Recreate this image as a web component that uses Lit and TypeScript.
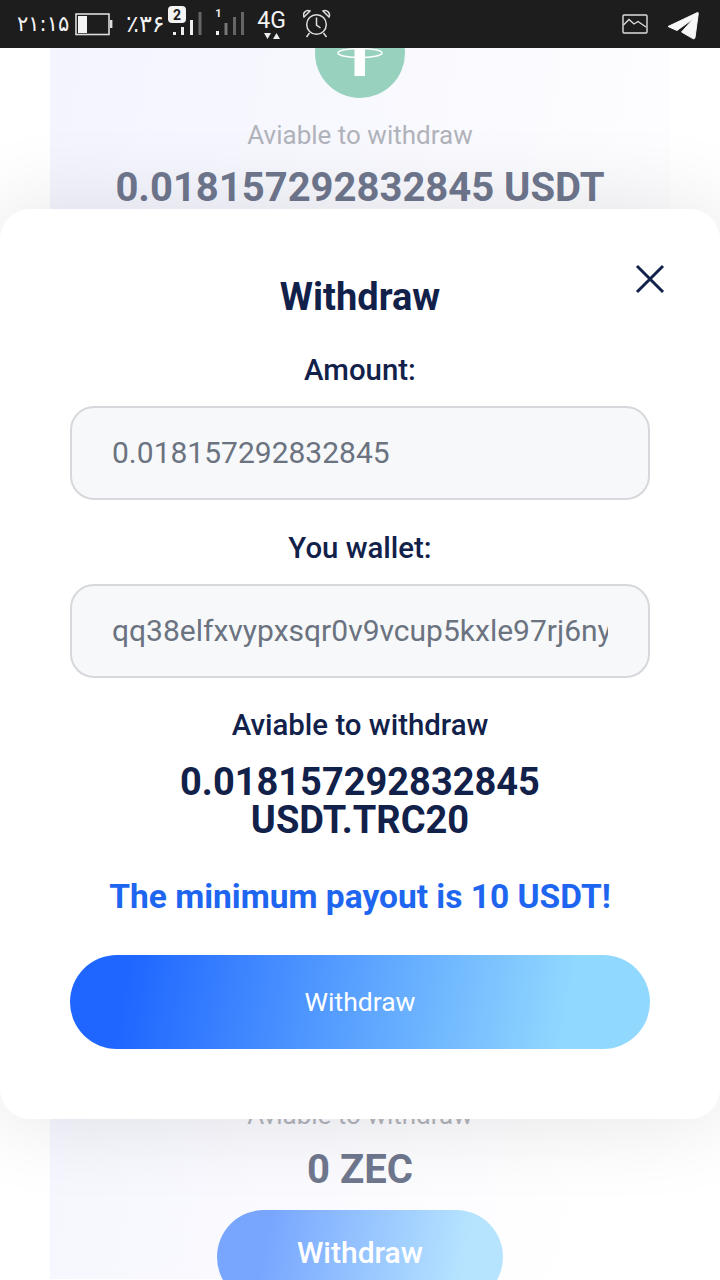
import { LitElement, html, css } from "lit";
import { customElement } from "lit/decorators.js";

@customElement("app-root")
export class AppRoot extends LitElement {
  static styles = css`
    :host { display: block; width: 720px; height: 1280px; position: relative; overflow: hidden; font-family: Roboto, "Liberation Sans", sans-serif; background: #fff; }
    .status { height: 48px; background: #1d1d1d; color: #f4f4f4; display: flex; align-items: center; padding: 0 21px 0 17px; box-sizing: border-box; position: relative; z-index: 3; }
    .status svg { display: block; flex: none; }
    .time { font: 500 21px "DejaVu Sans", sans-serif; width: 52px; white-space: nowrap; letter-spacing: -2.600px; line-height: 48px; }
    .pct { font: 500 24px "DejaVu Sans", sans-serif; letter-spacing: -1px; width: 40px; margin-left: 13px; white-space: nowrap; line-height: 48px; }
    .net { font: 400 23px Roboto, sans-serif; display: flex; flex-direction: column; align-items: center; line-height: 20px; width: 29px; margin-left: 13px; padding-top: 2px; }
    .net svg { margin-top: 2px; }
    .battery { margin-left: 6px; }
    .sig2 { margin-left: 12px; }
    .alarm { margin-left: 17px; }
    .photo { margin-right: 19px; }
    .spacer { flex: 1; }
    .page { height: 1232px; overflow: hidden; background: #fff; display: flex; justify-content: center; position: relative; }
    .cards { width: 620px; height: 1232px; background: linear-gradient(100deg, #f3f4fe, #fff 90%); display: flex; flex-direction: column; align-items: center; color: #6f778e; flex: none; margin-top: -1px; }
    .coin { width: 90px; height: 90px; border-radius: 50%; background: #98d2be; margin-top: -39px; flex: none; position: relative; }
    .coin svg { position: absolute; left: 0; top: 0; }
    .avail { font-size: 26px; line-height: 30px; color: #b1b3bb; margin-top: 22px; }
    .avail.low { margin-top: 0; }
    .val { font-size: 40px; font-weight: 700; line-height: 44px; margin-top: 16px; }
    .val.zec { margin-top: 18px; }
    .gap { height: 890px; flex: none; }
    .btn2 { width: 286px; height: 94px; box-sizing: border-box; padding-bottom: 10px; border-radius: 47px; background: linear-gradient(100deg, #78a6ff 18%, #b6e4ff 85%); color: #fff; font-size: 30px; font-weight: 500; display: flex; align-items: center; justify-content: center; margin-top: 18px; flex: none; }
    .sheet { position: absolute; left: 0; right: 0; top: 209px; height: 910px; background: #fff; border-radius: 30px; z-index: 2; box-sizing: border-box; padding: 64px 70px 0; display: flex; flex-direction: column; align-items: center; color: #12214a; text-align: center; box-shadow: 0 0 90px rgba(0,0,0,.11); }
    .close { position: absolute; top: 54px; right: 54px; }
    h2 { margin: 0; font-size: 38px; font-weight: 700; line-height: 48px; }
    .lbl { font-size: 29.400px; font-weight: 500; line-height: 36px; margin-top: 31px; }
    .input { width: 100%; height: 94px; box-sizing: border-box; border: 2px solid #d6d8dc; border-radius: 24px; background: #f7f8fa; color: #6b7380; font-size: 30px; padding: 0 40px 2px; display: flex; align-items: center; text-align: left; margin-top: 18px; flex: none; overflow: hidden; white-space: nowrap; }
    .input span { display: block; overflow: hidden; width: 100%; }
    .lbl.w { margin-top: 30px; }
    .lbl.a { margin-top: 29px; }
    .amount { font-size: 38px; font-weight: 700; line-height: 38px; margin-top: 20px; }
    .warn { color: #1e66f0; font-size: 33.500px; font-weight: 700; line-height: 40px; margin-top: 38px; }
    .btn { width: 100%; height: 94px; box-sizing: border-box; padding-bottom: 2px; border-radius: 47px; background: linear-gradient(100deg, #1e66ff 10%, #91d8ff 85%); color: #fff; font-size: 26.500px; display: flex; align-items: center; justify-content: center; margin-top: 38px; flex: none; }
  `;

  render() {
    return html`
      <div class="status">
        <span class="time">۲۱:۱۵</span>
        <svg class="battery" width="38" height="48" viewBox="0 0 38 48">
          <rect x="1" y="14" width="33" height="20.500" fill="none" stroke="#ddd" stroke-width="1.600"/>
          <rect x="3" y="16" width="9" height="17" fill="#f4f4f4"/>
          <rect x="35" y="20" width="2.400" height="8" fill="#ddd"/>
        </svg>
        <span class="pct">٪۳۶</span>
        <svg width="36" height="48" viewBox="166 0 36 48">
          <rect x="173" y="32" width="3" height="3" fill="#eee"/><rect x="181" y="27" width="3" height="8" fill="#eee"/><rect x="190" y="20" width="3" height="15" fill="#eee"/><rect x="198.500" y="12" width="3" height="23" fill="#666"/>
          <rect x="168" y="6" width="18" height="17" rx="4" fill="#f4f4f4"/>
          <text x="177" y="19.500" font-size="14" font-weight="700" font-family="Roboto" text-anchor="middle" fill="#1d1d1d">2</text>
        </svg>
        <svg class="sig2" width="30" height="48" viewBox="214 0 30 48">
          <text x="218.500" y="17" font-size="11" font-weight="700" font-family="Roboto" text-anchor="middle" fill="#eee">1</text>
          <rect x="216" y="31" width="3" height="4" fill="#eee"/><rect x="224.500" y="23" width="3" height="12" fill="#777"/><rect x="233" y="17" width="3" height="18" fill="#666"/><rect x="241" y="12" width="3" height="23" fill="#666"/>
        </svg>
        <div class="net">4G
          <svg width="16" height="6" viewBox="0 0 16 6"><path d="M0 0h7L3.500 6zM9 6h7l-3.500-6z" fill="#eee"/></svg>
        </div>
        <svg class="alarm" width="28" height="48" viewBox="0 0 28 48" fill="none" stroke="#ddd" stroke-width="1.500">
          <circle cx="13.500" cy="24.500" r="9.800"/><path d="M13.500 17.500v7.500l4 3M6.500 33l-3 4M20.500 33l3 4"/><path d="M1 17a4.500 4.500 0 0 1 6-6zM26 17a4.500 4.500 0 0 0-6-6z"/>
        </svg>
        <span class="spacer"></span>
        <svg class="photo" width="26" height="20" viewBox="0 0 26 20" fill="none" stroke="#ddd" stroke-width="1.400">
          <rect x="1" y="1" width="24" height="18" rx="1"/><path d="M1.500 11 7 5.500l5 4.500 4-2.500 8 5.500"/>
        </svg>
        <svg width="32" height="48" viewBox="0 0 32 48">
          <path d="M1 26.500 30.500 12.500 C31 12.300 31.500 12.800 31.300 13.500 L28 37.500 C27.800 38.800 26.800 39.200 25.800 38.500 L14.500 32 L26.500 18.500 L10 30.500 Z" fill="#f7f7f7" stroke="#f7f7f7" stroke-linejoin="round"/>
        </svg>
      </div>
      <div class="page">
        <div class="cards">
          <div class="coin">
            <svg width="90" height="90" viewBox="0 0 90 90">
              <rect x="39.500" y="30" width="10.500" height="38" fill="#fff"/>
              <ellipse cx="45" cy="45" rx="22" ry="4.500" fill="none" stroke="#fff" stroke-width="1.500"/>
            </svg>
          </div>
          <div class="avail">Aviable to withdraw</div>
          <div class="val">0.018157292832845 USDT</div>
          <div class="gap"></div>
          <div class="avail low">Aviable to withdraw</div>
          <div class="val zec">0 ZEC</div>
          <div class="btn2">Withdraw</div>
        </div>
      </div>
      <div class="sheet">
        <svg class="close" width="32" height="32" viewBox="0 0 32 32" fill="none" stroke="#12214a" stroke-width="3">
          <path d="M3 3l26 26M29 3 3 29"/>
        </svg>
        <h2>Withdraw</h2>
        <div class="lbl">Amount:</div>
        <div class="input"><span>0.018157292832845</span></div>
        <div class="lbl w">You wallet:</div>
        <div class="input"><span>qq38elfxvypxsqr0v9vcup5kxle97rj6nyqxz</span></div>
        <div class="lbl a">Aviable to withdraw</div>
        <div class="amount">0.018157292832845<br />USDT.TRC20</div>
        <div class="warn">The minimum payout is 10 USDT!</div>
        <div class="btn">Withdraw</div>
      </div>
    `;
  }
}
